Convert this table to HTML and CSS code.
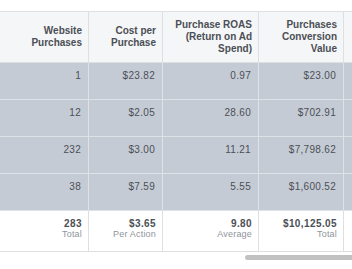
FILE: index.html
```html
<!DOCTYPE html>
<html>
<head>
<meta charset="utf-8">
<link rel="stylesheet" href="styles.css">
</head>
<body>
<div class="wrap">
  <div class="table">
    <div class="row head">
      <div class="cell"></div>
      <div class="cell">Website<br>Purchases</div>
      <div class="cell">Cost per<br>Purchase</div>
      <div class="cell">Purchase ROAS<br>(Return on Ad<br>Spend)</div>
      <div class="cell">Purchases<br>Conversion<br>Value</div>
      <div class="cell"></div>
    </div>
    <div class="row data">
      <div class="cell"></div>
      <div class="cell">1</div>
      <div class="cell">$23.82</div>
      <div class="cell">0.97</div>
      <div class="cell">$23.00</div>
      <div class="cell"></div>
    </div>
    <div class="row data">
      <div class="cell"></div>
      <div class="cell">12</div>
      <div class="cell">$2.05</div>
      <div class="cell">28.60</div>
      <div class="cell">$702.91</div>
      <div class="cell"></div>
    </div>
    <div class="row data">
      <div class="cell"></div>
      <div class="cell">232</div>
      <div class="cell">$3.00</div>
      <div class="cell">11.21</div>
      <div class="cell">$7,798.62</div>
      <div class="cell"></div>
    </div>
    <div class="row data">
      <div class="cell"></div>
      <div class="cell">38</div>
      <div class="cell">$7.59</div>
      <div class="cell">5.55</div>
      <div class="cell">$1,600.52</div>
      <div class="cell"></div>
    </div>
    <div class="row total">
      <div class="cell"></div>
      <div class="cell"><span class="val">283</span><span class="lbl">Total</span></div>
      <div class="cell"><span class="val">$3.65</span><span class="lbl">Per Action</span></div>
      <div class="cell"><span class="val">9.80</span><span class="lbl">Average</span></div>
      <div class="cell"><span class="val">$10,125.05</span><span class="lbl">Total</span></div>
      <div class="cell"></div>
    </div>
  </div>
  <div class="scrollbar"></div>
</div>
</body>
</html>
```
FILE: styles.css
```css
html, body {
  margin: 0;
  padding: 0;
  background: #ffffff;
  overflow: hidden;
}
body {
  font-family: "Liberation Sans", Arial, sans-serif;
  color: #4b4f56;
}
.wrap {
  padding-top: 11px;
  width: 352px;
  overflow: hidden;
}
.table {
  width: 384px;
  border-top: 1px solid #dddfe2;
}
.row {
  display: grid;
  grid-template-columns: 5px 84px 74px 96px 85px 40px;
}
.cell {
  box-sizing: border-box;
  border-right: 1px solid #dddfe2;
  border-bottom: 1px solid #dddfe2;
  padding-right: 6px;
  text-align: right;
}
.head .cell {
  height: 51px;
  background: #f5f6f7;
  font-size: 10px;
  font-weight: bold;
  line-height: 12px;
  display: flex;
  flex-direction: column;
  justify-content: center;
  align-items: flex-end;
}
.data .cell {
  height: 37px;
  background: #c5cbd5;
  border-color: #dfe2e7;
  font-size: 10px;
  line-height: 12px;
  padding-top: 7px;
  padding-right: 7px;
  letter-spacing: 0.3px;
}
.total .cell {
  height: 41px;
  background: #ffffff;
  padding-top: 7px;
  display: flex;
  flex-direction: column;
  align-items: flex-end;
}
.val {
  font-size: 10px;
  font-weight: bold;
  line-height: 11px;
  letter-spacing: 0.4px;
}
.lbl {
  font-size: 9px;
  line-height: 11px;
  color: #90949c;
  letter-spacing: 0.2px;
}
.scrollbar {
  margin-top: 3px;
  margin-left: 245px;
  width: 130px;
  height: 5px;
  border-radius: 3px;
  background: #c1c1c1;
}
```
